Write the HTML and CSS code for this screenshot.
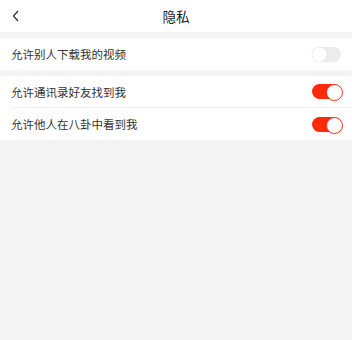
FILE: index.html
```html
<!DOCTYPE html>
<html lang="zh">
<head>
    <meta charset="UTF-8">
    <meta name="viewport" content="width=device-width, initial-scale=1.0">
    <title>隐私</title>
    <link rel="stylesheet" href="styles.css">
</head>
<body>
    <div class="header">
        <span class="back">
            <svg width="8" height="12" viewBox="0 0 8 12"><path d="M6 1 L1.5 6 L6 11" fill="none" stroke="#333" stroke-width="1.3"/></svg>
        </span>
        <h1 class="title">隐私</h1>
    </div>
    <div class="group">
        <div class="row">
            <span class="label">允许别人下载我的视频</span>
            <span class="switch"></span>
        </div>
    </div>
    <div class="group">
        <div class="row">
            <span class="label">允许通讯录好友找到我</span>
            <span class="switch on"></span>
        </div>
        <div class="row">
            <span class="label">允许他人在八卦中看到我</span>
            <span class="switch on"></span>
        </div>
    </div>
</body>
</html>
```

FILE: styles.css
```css
* {
    margin: 0;
    padding: 0;
    box-sizing: border-box;
}
:root {
    --bg: #f4f4f4;
    --line: #f0f0f0;
    --red: #ff2a0a;
    --text: #333;
}
body {
    background-color: var(--bg);
    font-family: "Noto Sans CJK SC", "Noto Sans", sans-serif;
    color: var(--text);
}
.header {
    height: 32px;
    background: white;
    display: flex;
    align-items: center;
    justify-content: center;
    position: relative;
}
.back {
    position: absolute;
    left: 12px;
    top: 10px;
    display: flex;
}
.title {
    font-size: 13.5px;
    font-weight: normal;
    color: #222;
}
.group {
    background: white;
    margin-top: 6px;
}
.row {
    height: 32px;
    margin-left: 11px;
    padding-right: 11px;
    display: flex;
    align-items: center;
    justify-content: space-between;
    border-bottom: 1px solid var(--line);
}
.group .row:last-child {
    border-bottom: none;
}
.label {
    font-size: 11.5px;
}
.switch {
    width: 29px;
    height: 15px;
    border-radius: 8px;
    background: #ececec;
    position: relative;
}
.switch::after {
    content: "";
    position: absolute;
    top: 0;
    left: 0;
    width: 15px;
    height: 15px;
    border-radius: 50%;
    background: white;
    box-shadow: 0 0 1px rgba(0, 0, 0, 0.25);
}
.switch.on {
    background: var(--red);
}
.switch.on::after {
    left: 14px;
    box-shadow: none;
    border: 1px solid var(--red);
}
```
